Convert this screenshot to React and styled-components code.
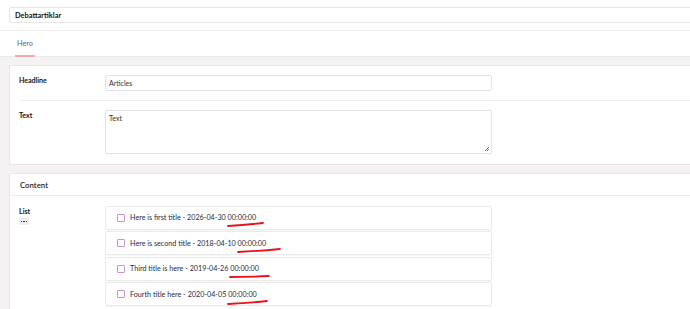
import React from "react";
import styled, { createGlobalStyle } from "styled-components";

const GlobalStyle = createGlobalStyle`
  body {
    margin: 0;
    background: #f4f2f2;
    font-family: Lato, "Open Sans", sans-serif;
    color: #333740;
    overflow: hidden;
  }
`;

const Page = styled.div`
  width: 690px;
  height: 309px;
  overflow: hidden;
`;

const Header = styled.header`
  background: #fff;
  padding: 7px 0 7px 9px;
`;

const TitleInput = styled.div`
  width: calc(100% + 4px);
  height: 16px;
  box-sizing: border-box;
  border: 1px solid #e6e6e6;
  border-radius: 2px;
  display: flex;
  align-items: center;
  padding-left: 5px;
  font-size: 7.4px;
  font-weight: 700;
  color: #111;
`;

const TabBar = styled.nav`
  background: #fff;
  height: 25px;
  border-top: 1px solid #f0eeee;
  border-bottom: 1px solid #ebe9e9;
  display: flex;
  padding-left: 15px;
`;

const Tab = styled.div`
  display: flex;
  align-items: center;
  padding: 0 2px;
  font-size: 7.2px;
  color: ${({ active }) => (active ? "#4b6aa6" : "#666")};
  border-bottom: 2px solid ${({ active }) => (active ? "#f2aaa2" : "transparent")};
  margin-bottom: -1px;
`;

const Main = styled.main`
  padding: 8px 0 0 9px;
  display: flex;
  flex-direction: column;
  gap: 8px;
`;

const Card = styled.section`
  background: #fff;
  border: 1px solid #e9e7e7;
  border-right: none;
  border-radius: 2px;
  width: calc(100% + 4px);
  box-sizing: border-box;
`;

const CardTitle = styled.h2`
  margin: 0;
  height: 21px;
  display: flex;
  align-items: center;
  padding-left: 10px;
  font-size: 7.8px;
  font-weight: 600;
  color: #222;
  border-bottom: 1px solid #eeeded;
`;

const Row = styled.div`
  display: flex;
  margin-left: 9px;
  padding: ${({ pad }) => pad || "9px 0"};
  border-bottom: ${({ last }) => (last ? "none" : "1px solid #efeeee")};
`;

const Label = styled.div`
  width: 86px;
  flex: none;
  padding-top: 1px;
  font-size: 7px;
  font-weight: 700;
  color: #111;
  display: flex;
  flex-direction: column;
  align-items: flex-start;
  gap: 3px;
`;

const Dots = styled.span`
  background: #efeded;
  border-radius: 2px;
  width: 10px;
  height: 7px;
  display: flex;
  align-items: center;
  justify-content: center;
  gap: 1px;
`;

const Dot = styled.i`
  width: 1.4px;
  height: 1.4px;
  border-radius: 50%;
  background: #222;
`;

const TextField = styled.div`
  width: 387px;
  height: ${({ tall }) => (tall ? "44px" : "16px")};
  box-sizing: border-box;
  border: 1px solid #e3e3e3;
  border-radius: 2px;
  padding: ${({ tall }) => (tall ? "3px 3px" : "0 3px")};
  display: flex;
  align-items: ${({ tall }) => (tall ? "flex-start" : "center")};
  font-size: 7px;
  color: #333;
  position: relative;
`;

const Grip = styled.svg`
  position: absolute;
  right: 1px;
  bottom: 1px;
`;

const List = styled.div`
  display: flex;
  flex-direction: column;
  gap: 1.6px;
`;

const Item = styled.div`
  width: 387px;
  height: 23.8px;
  box-sizing: border-box;
  border: 1px solid #ebeaea;
  border-radius: 2px;
  box-shadow: 0 1px 1px rgba(0, 0, 0, 0.03);
  display: flex;
  align-items: center;
  padding-left: 11px;
  gap: 5px;
  font-size: 7.2px;
  color: #262b40;
`;

const Check = styled.span`
  width: 8px;
  height: 8px;
  box-sizing: border-box;
  border: 1px solid #c88fd6;
  border-radius: 1px;
  flex: none;
`;

const Time = styled.span`
  position: relative;
`;

const Mark = styled.svg`
  position: absolute;
  left: 0;
  top: 100%;
  overflow: visible;
`;

const items = [
  { title: "Here is first title", date: "2026-04-30", w: 35, dy: 1, tilt: -1 },
  { title: "Here is second title", date: "2018-04-10", w: 42, dy: 1, tilt: -1 },
  { title: "Third title is here", date: "2019-04-26", w: 39, dy: 2, tilt: 0 },
  { title: "Fourth title here", date: "2020-04-05", w: 39, dy: 2, tilt: -1 },
];

export default function App() {
  return (
    <Page>
      <GlobalStyle />
      <Header>
        <TitleInput>Debattartiklar</TitleInput>
      </Header>
      <TabBar>
        <Tab active>Hero</Tab>
      </TabBar>
      <Main>
        <Card>
          <Row>
            <Label>Headline</Label>
            <TextField>Articles</TextField>
          </Row>
          <Row last pad="9px 0 10px">
            <Label>Text</Label>
            <TextField tall>
              Text
              <Grip width="6" height="6" viewBox="0 0 6 6">
                <path d="M5 1 L1 5 M5 3 L3 5" stroke="#555" strokeWidth="0.8" />
              </Grip>
            </TextField>
          </Row>
        </Card>
        <Card>
          <CardTitle>Content</CardTitle>
          <Row last pad="10px 0 4px">
            <Label>
              List
              <Dots>
                <Dot />
                <Dot />
                <Dot />
              </Dots>
            </Label>
            <List>
              {items.map(it => (
                <Item key={it.title}>
                  <Check />
                  <span>
                    {it.title} - {it.date}{" "}
                    <Time>
                      00:00:00
                      <Mark width={it.w} height="4" style={{ marginTop: it.dy }}>
                        <path
                          d={`M0 ${2 - it.tilt} Q${it.w / 2} 2 ${it.w} ${1 + it.tilt}`}
                          stroke="#e8141a"
                          strokeWidth="1.8"
                          strokeLinecap="round"
                          fill="none"
                        />
                      </Mark>
                    </Time>
                  </span>
                </Item>
              ))}
            </List>
          </Row>
        </Card>
      </Main>
    </Page>
  );
}
